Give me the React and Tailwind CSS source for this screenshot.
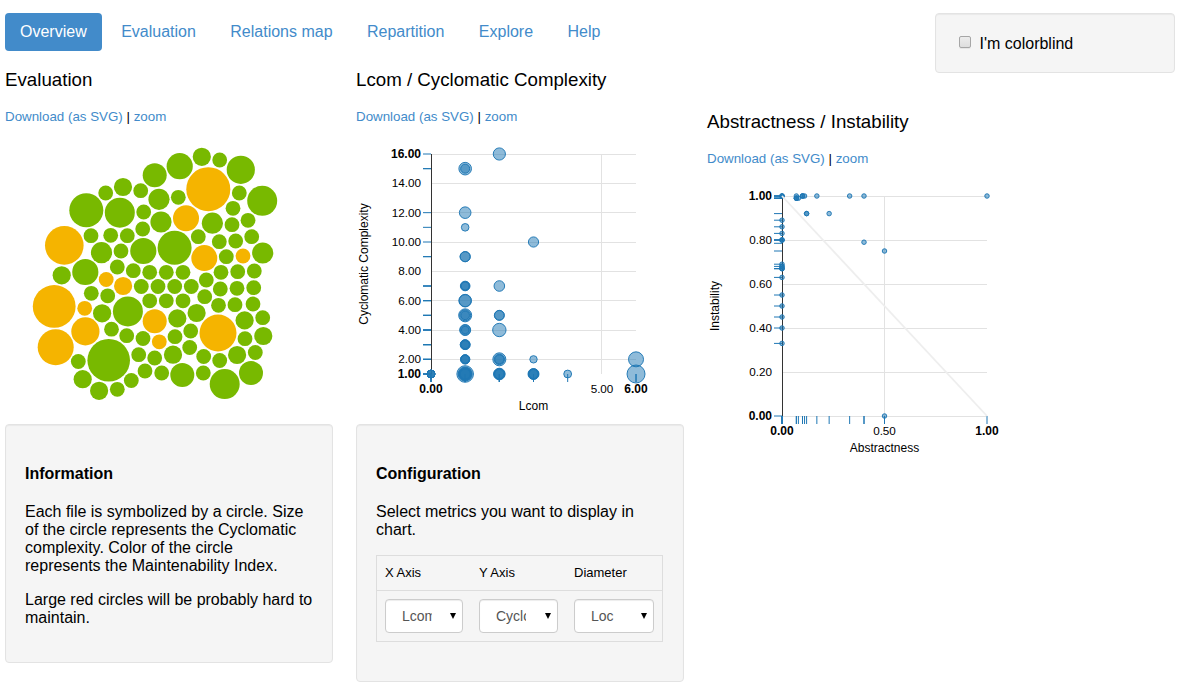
import React from "react";

const G = "#78b900";
const Y = "#f5b400";
const BLUE = "#1f77b4";

const SMALL = 7.4;

const greenSmall = [
  [105.7, 193], [140.7, 190.7], [143.7, 212], [142.7, 229], [91, 235.7], [110.7, 235.3], [127.3, 235.7],
  [121, 251], [117.3, 267], [133.3, 270.7], [149.7, 272.3], [219.7, 160], [178.3, 197.3], [239.3, 193],
  [233, 208.3], [232, 224.7], [248, 220.3], [198.3, 236.7], [219.3, 241.7], [235.7, 241], [251.7, 236.7],
  [226.3, 256.7], [166.3, 272.3], [183, 272.3], [221, 272.3], [237.7, 271.7], [254.3, 271], [206.3, 280],
  [158, 286.5], [174.7, 286.5], [191.3, 286.5], [220.3, 289], [237, 288.3], [253.7, 287.7], [149.7, 300.8],
  [166.3, 300.8], [183, 300.8], [204.7, 296.7], [218.5, 305.3], [235, 304.7], [253, 304], [262.7, 317.7],
  [175, 336.7], [190.7, 331], [245, 338.7], [189.7, 347.5], [255.3, 352.5], [154.7, 358], [203.7, 356.5],
  [219.7, 360.5], [161.7, 373], [203.3, 373], [91.3, 293.3], [107.7, 295.8], [141.3, 286.5], [111.5, 329.2],
  [126.7, 335.7], [143, 338.5], [78.3, 361.5], [138.7, 354.7], [117.3, 389.3], [131.3, 380.5], [145, 371],
];

const yellowSmall = [[106.2, 279.5], [243, 256], [159.3, 341.8], [84.7, 308.3]];

const large = [
  [86.3, 210.2, 17, G], [119.8, 212.7, 15, G], [123, 187, 9.1, G], [154.7, 175.3, 12, G], [64.3, 245.4, 19.3, Y],
  [101.5, 252.7, 10.6, G], [143.3, 251, 13.1, G], [61.7, 275.3, 9.1, G], [85.3, 272, 13.1, G],
  [179.7, 166.2, 13.1, G], [201.8, 156.8, 9.1, G], [240.8, 169.8, 14.1, G], [159, 199.3, 10.6, G],
  [208.3, 189.2, 22, Y], [262.2, 200.8, 15, G], [161, 222, 10.6, G], [186, 218.2, 13, Y], [212.4, 223.2, 10.6, G],
  [174.6, 247.7, 17, G], [204.3, 258.1, 13, Y], [262.7, 253, 10.6, G], [154.7, 321.3, 12, Y],
  [177.3, 318.4, 9.1, G], [196.6, 313, 9.1, G], [218, 333, 18.5, Y], [244.6, 320.4, 9.1, G],
  [263.3, 336, 9.1, G], [173, 354.7, 9.1, G], [237.1, 355, 9.1, G], [182.3, 375.1, 12, G],
  [224.7, 384.1, 15, G], [251, 373.1, 12, G], [54.2, 306.4, 21.4, Y], [123.1, 286, 9.1, Y],
  [102.1, 313.3, 9.1, G], [127.9, 311.4, 15, G], [85.4, 331.4, 14.1, Y], [55.7, 347.2, 18, Y],
  [108.7, 360.3, 21.3, G], [82.7, 379.2, 9.1, G], [99.1, 390.8, 9.1, G],
];

const bubbles = [
  ...greenSmall.map(([x, y]) => [x, y, SMALL, G]),
  ...yellowSmall.map(([x, y]) => [x, y, SMALL, Y]),
  ...large,
];

// [x, y, radii]
const lcomPoints = [
  [0, 1, [4, 4, 4, 4]],
  [1, 15, [6.3, 4.5]], [1, 12, [5.8]], [1, 11, [3.8]], [1, 9, [5.1, 5]], [1, 7, [4.8, 4.5, 4]],
  [1, 6, [6.3, 6]], [1, 5, [6.5, 5.5, 4.3]], [1, 4, [5.5, 5, 3.8]], [1, 3, [4.9, 4.9, 4.5, 4]],
  [1, 2, [4.6, 4.6, 4.3, 4]], [1, 1, [8.3, 7, 6.3, 6, 5.5, 5]],
  [2, 16, [6.1]], [2, 7, [5.3]], [2, 5, [5, 4.8]], [2, 4, [6.7]], [2, 2, [6.5, 5.2, 4.5]],
  [2, 1, [5.8, 5.4, 5, 4.6]],
  [3, 10, [5.1]], [3, 2, [3.7]], [3, 1, [5.5, 5, 5, 4.5]],
  [4, 1, [3.9]], [6, 2, [7.5]], [6, 1, [9]],
];

const instabilityPoints = [
  [0, 1, 3], [0, 0.89, 1], [0, 0.86, 1], [0, 0.83, 1], [0, 0.8, 3], [0, 0.69, 1], [0, 0.68, 2], [0, 0.67, 3],
  [0, 0.63, 1], [0, 0.55, 1], [0, 0.5, 1], [0, 0.45, 1], [0, 0.4, 1], [0, 0.33, 1],
  [0.07, 1, 1], [0.07, 0.99, 3], [0.08, 0.99, 1], [0.1, 1, 3], [0.11, 1, 1], [0.17, 1, 1], [0.33, 1, 1],
  [0.4, 1, 1], [1, 1, 1], [0.12, 0.92, 2], [0.23, 0.92, 1], [0.4, 0.79, 1], [0.5, 0.75, 1], [0.5, 0, 1],
];

function Dot({ cx, cy, r }) {
  return <circle cx={cx} cy={cy} r={r} fill={BLUE} fillOpacity="0.5" stroke={BLUE} strokeOpacity="0.95" strokeWidth="1" />;
}

function Tick({ n = 1, ...pos }) {
  return Array.from({ length: n }, (_, i) => <line key={i} {...pos} stroke={BLUE} strokeWidth="1" />);
}

function Label({ x, y, bold, size = 11.7, anchor = "middle", children, ...rest }) {
  return (
    <text x={x} y={y} fontSize={bold ? 12 : size} fontWeight={bold ? 700 : 400} textAnchor={anchor} fill="#000" {...rest}>
      {children}
    </text>
  );
}

function EvaluationChart() {
  return (
    <svg className="block" width="328" height="294" viewBox="5 130 328 294">
      {bubbles.map(([x, y, r, c], i) => (
        <circle key={i} cx={x} cy={y} r={r} fill={c} />
      ))}
    </svg>
  );
}

function LcomChart() {
  const px = (v) => 431 + v * 34.17;
  const py = (v) => 374 - (v - 1) * (220 / 15);
  return (
    <svg className="block" width="328" height="294" viewBox="356 130 328 294">
      {[2, 4, 6, 8, 10, 12, 14, 16].map((v) => (
        <line key={v} x1="431" x2="636" y1={Math.floor(py(v)) + 0.5} y2={Math.floor(py(v)) + 0.5} stroke="#e2e2e2" />
      ))}
      <line x1="601.5" x2="601.5" y1="154" y2="374" stroke="#e2e2e2" />
      <line x1="431.5" x2="431.5" y1="154" y2="374" stroke="#333" />
      {[1, 2, 3, 4, 5, 6, 7, 9, 10, 11, 12, 15, 16].map((v) => (
        <Tick key={v} x1="423" x2="431" y1={py(v)} y2={py(v)} n={v < 5 ? 4 : v < 8 ? 3 : v === 9 || v === 15 ? 2 : 1} />
      ))}
      {[0, 1, 2, 3, 4, 6].map((v) => (
        <Tick key={v} x1={px(v)} x2={px(v)} y1="374" y2="382" n={v < 3 ? 4 : v === 4 ? 1 : 2} />
      ))}
      {lcomPoints.flatMap(([x, y, rs]) =>
        rs.map((r, i) => <Dot key={`${x}-${y}-${i}`} cx={px(x)} cy={py(y)} r={r} />)
      )}
      {[1, 2, 4, 6, 8, 10, 12, 14, 16].map((v) => (
        <Label key={v} x="421" y={Math.round(py(v)) + 4} anchor="end" bold={v === 1 || v === 16}>
          {v.toFixed(2)}
        </Label>
      ))}
      <Label x="431" y="393" bold>0.00</Label>
      <Label x="602" y="393">5.00</Label>
      <Label x="636" y="393" bold>6.00</Label>
      <Label x="533.5" y="410" size={12}>Lcom</Label>
      <Label x="0" y="0" size={12} transform="translate(368 264) rotate(-90)">Cyclomatic Complexity</Label>
    </svg>
  );
}

function InstabilityChart() {
  const px = (v) => 782 + v * 205;
  const py = (v) => 416 - v * 220;
  return (
    <svg className="block" width="328" height="294" viewBox="707 172 328 294">
      {[0, 0.2, 0.4, 0.6, 0.8, 1].map((v) => (
        <line key={v} x1="782" x2="987" y1={py(v) + 0.5} y2={py(v) + 0.5} stroke="#e2e2e2" />
      ))}
      <line x1="884.5" x2="884.5" y1="196" y2="416" stroke="#e2e2e2" />
      <line x1="782.5" x2="782.5" y1="196" y2="416" stroke="#333" />
      {[0, 0.33, 0.4, 0.45, 0.5, 0.55, 0.63, 0.67, 0.68, 0.69, 0.75, 0.785, 0.8, 0.83, 0.86, 0.89, 0.92, 0.99, 1].map((v) => (
        <Tick key={v} x1="774" x2="782" y1={py(v)} y2={py(v)} n={[0.67, 0.8, 0.99, 1].includes(v) ? 4 : 1} />
      ))}
      {[0, 0.07, 0.08, 0.1, 0.11, 0.12, 0.17, 0.23, 0.33, 0.4, 0.5, 1].map((v) => (
        <Tick key={v} x1={px(v)} x2={px(v)} y1="416" y2="424" n={v === 0 ? 5 : v === 0.4 || v === 0.07 || v === 0.1 ? 2 : 1} />
      ))}
      {instabilityPoints.flatMap(([x, y, n]) =>
        Array.from({ length: n }, (_, i) => <Dot key={`${x}-${y}-${i}`} cx={px(x)} cy={py(y)} r={2.25} />)
      )}
      <line x1="782" y1="196" x2="987" y2="416" stroke="#eee" strokeWidth="1.8" />
      {[0, 0.2, 0.4, 0.6, 0.8, 1].map((v) => (
        <Label key={v} x="772" y={py(v) + 4} anchor="end" bold={v === 0 || v === 1}>
          {v.toFixed(2)}
        </Label>
      ))}
      <Label x="782" y="435" bold>0.00</Label>
      <Label x="884.5" y="435">0.50</Label>
      <Label x="987" y="435" bold>1.00</Label>
      <Label x="884.5" y="452" size={12}>Abstractness</Label>
      <Label x="0" y="0" size={12} transform="translate(719 306) rotate(-90)">Instability</Label>
    </svg>
  );
}

function Panel({ title, children }) {
  return (
    <>
      <h3 className="mt-[18px] h-[22px] text-[18.72px] leading-[22px]">{title}</h3>
      <div className="mt-4 mb-[3px] h-5 text-[13.33px] leading-5">
        <a className="text-[#428bca]">Download (as SVG)</a> | <a className="text-[#428bca]">zoom</a>
      </div>
      {children}
    </>
  );
}

function Well({ className, children }) {
  return (
    <div className={`rounded-[4px] border border-[#e3e3e3] bg-[#f5f5f5] shadow-[inset_0_1px_1px_rgba(0,0,0,0.05)] ${className}`}>
      {children}
    </div>
  );
}

function Select({ value, width }) {
  return (
    <div className={`flex h-[34px] items-center justify-between rounded-[4px] border border-[#ccc] bg-white pr-1.5 pl-4 text-sm text-[#555] shadow-[inset_0_1px_1px_rgba(0,0,0,0.075)] ${width}`}>
      <span className="w-[30px] overflow-hidden whitespace-nowrap">{value}</span>
      <svg width="6" height="6" viewBox="0 0 6 6">
        <path d="M0 0H6L3 6Z" fill="#000" />
      </svg>
    </div>
  );
}

const tabs = ["Overview", "Evaluation", "Relations map", "Repartition", "Explore", "Help"];

export default function App() {
  return (
    <div className="h-[693px] w-[1204px] overflow-hidden bg-white pt-[13px] pl-[5px] font-['Liberation_Sans',Arial,sans-serif] text-base leading-[18px] text-black">
      <div className="flex h-[38px] items-start justify-between pr-[29px]">
        <nav className="flex gap-[4.45px]">
          {tabs.map((t, i) => (
            <a
              key={t}
              className={`flex h-[38px] items-center rounded-[4px] px-[15px] ${i === 0 ? "bg-[#428bca] text-white" : "text-[#428bca]"}`}
            >
              {t}
            </a>
          ))}
        </nav>
        <Well className="flex h-[60px] w-60 shrink-0 items-center pl-[23px]">
          <span className="mr-[8.5px] mb-[3px] h-3 w-3 rounded-[2px] border border-[#a6a6a6] bg-linear-to-b from-[#ededed] to-[#dedede] shadow-[0_1px_0_rgba(0,0,0,0.06)]" />
          <span className="pt-0.5">I'm colorblind</span>
        </Well>
      </div>

      <div className="flex items-start gap-[23px]">
        <section className="w-[328px]">
          <Panel title="Evaluation">
            <EvaluationChart />
          </Panel>
          <Well className="h-[239px] px-[19px] pt-10">
            <h4 className="font-bold">Information</h4>
            <p className="mt-5 pr-1">
              Each file is symbolized by a circle. Size of the circle represents the Cyclomatic complexity. Color of the
              circle represents the Maintenability Index.
            </p>
            <p className="mt-4">Large red circles will be probably hard to maintain.</p>
          </Well>
        </section>

        <section className="w-[328px]">
          <Panel title="Lcom / Cyclomatic Complexity">
            <LcomChart />
          </Panel>
          <Well className="h-[258px] px-[19px] pt-10">
            <h4 className="font-bold">Configuration</h4>
            <p className="mt-5">Select metrics you want to display in chart.</p>
            <div className="mt-4 w-[287px] border border-[#ddd] text-[13px]">
              <div className="flex h-[35px] items-center border-b border-[#ddd] pl-2">
                <span className="w-[94px]">X Axis</span>
                <span className="w-[95px]">Y Axis</span>
                <span>Diameter</span>
              </div>
              <div className="flex h-[50px] items-center gap-4 pl-2">
                <Select value="Lcom" width="w-[78px]" />
                <Select value="Cyclomatic" width="w-[79px]" />
                <Select value="Loc" width="w-[80px]" />
              </div>
            </div>
          </Well>
        </section>

        <section className="w-[328px] pt-[42px]">
          <Panel title="Abstractness / Instability">
            <InstabilityChart />
          </Panel>
        </section>
      </div>
    </div>
  );
}
